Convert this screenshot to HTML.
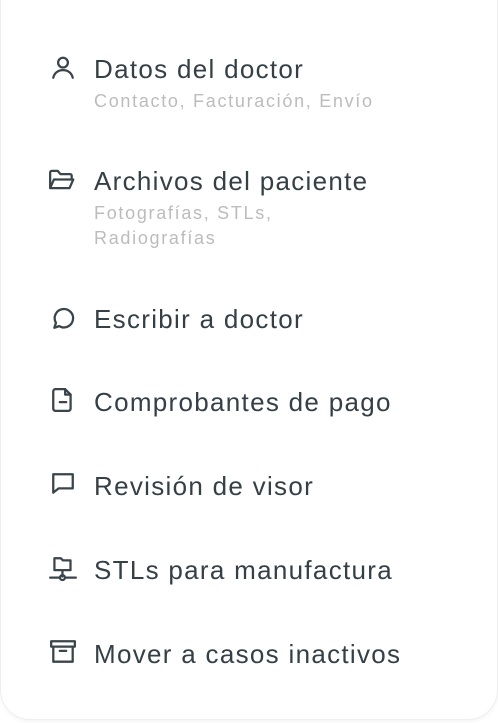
<!DOCTYPE html><html><head><style>
body{margin:0;width:498px;height:723px;background:#fff;font-family:"Liberation Sans",sans-serif;position:relative;overflow:hidden}
.card{position:absolute;left:0;top:-40px;width:496px;height:758px;border:1px solid #eee;border-radius:30px;box-shadow:0 2px 4px rgba(0,0,0,0.04)}
.t{position:absolute;left:94px;font-size:26px;letter-spacing:1.3px;color:#353f46;white-space:nowrap;line-height:28px}
.s{position:absolute;left:94px;font-size:18px;letter-spacing:1.7px;color:#bcbcbc;line-height:25px;white-space:nowrap}
svg{position:absolute;fill:none;stroke:#3a444b;stroke-width:2.1;stroke-linecap:round;stroke-linejoin:round}
</style></head><body>
<div class="card"></div>
<svg style="left:50px;top:55px" width="26" height="26" viewBox="0 0 24 24"><circle cx="12" cy="7" r="4.5"/><path d="M3 21c1-4.5 4.5-7 9-7s8 2.5 9 7"/></svg>
<div class="t" style="top:55px">Datos del doctor</div>
<div class="s" style="top:89px">Contacto, Facturación, Envío</div>
<svg style="left:48px;top:167px" width="28" height="26" viewBox="0 0 26 24"><path d="M2 19V5a1.5 1.5 0 0 1 1.5-1.5H9l2.5 3h9A1.5 1.5 0 0 1 22 8v3"/><path d="M2 19.5l3.5-8h18l-3.5 8z"/></svg>
<div class="t" style="top:167px">Archivos del paciente</div>
<div class="s" style="top:201px">Fotografías, STLs,<br>Radiografías</div>
<svg style="left:50px;top:305px" width="26" height="26" viewBox="0 0 24 24"><path d="M4 21l1.5-4.5A8.5 8.5 0 1 1 8.5 19.5z"/></svg>
<div class="t" style="top:305px">Escribir a doctor</div>
<svg style="left:51px;top:387px" width="24" height="26" viewBox="0 0 22 24"><path d="M4 2h9l5 5v13a2 2 0 0 1-2 2H4a2 2 0 0 1-2-2V4a2 2 0 0 1 2-2z"/><path d="M13 2v5h5M8 14h6"/></svg>
<div class="t" style="top:388px">Comprobantes de pago</div>
<svg style="left:50px;top:471px" width="26" height="26" viewBox="0 0 24 24"><path d="M3 3h18v13H8l-5 4z"/></svg>
<div class="t" style="top:472px">Revisión de visor</div>
<svg style="left:48px;top:554px" width="30" height="30" viewBox="0 0 28 28"><path d="M6 4h6l2 2h7v9H6z"/><path d="M13.5 15v6M2 22h9M16 22h10"/><circle cx="13.5" cy="22" r="2.3"/></svg>
<div class="t" style="top:556px">STLs para manufactura</div>
<svg style="left:49px;top:639px" width="28" height="26" viewBox="0 0 26 24"><path d="M2 2h22v5H2zM4 7v14h18V7M10 11h6"/></svg>
<div class="t" style="top:640px">Mover a casos inactivos</div>
</body></html>
